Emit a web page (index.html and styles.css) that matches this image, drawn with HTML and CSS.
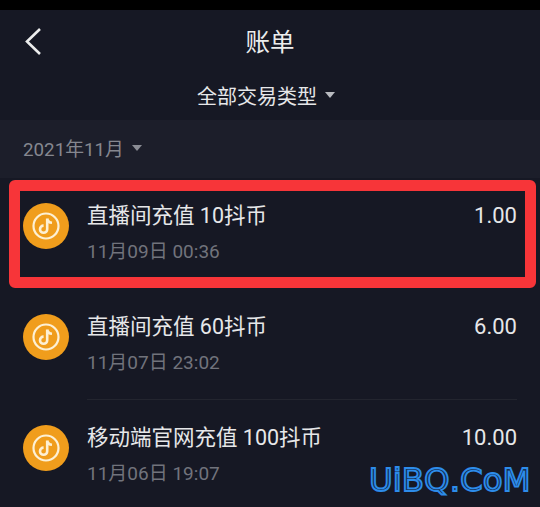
FILE: index.html
```html
<!DOCTYPE html>
<html>
<head>
    <title>账单</title>
    <link rel="stylesheet" href="styles.css">
</head>
<body>
    <div class="status-bar"></div>
    <header class="top">
        <div class="title-row">
            <svg class="back" width="18" height="28" viewBox="0 0 18 28">
                <path d="M16 2 L3 14.5 L16 27" fill="none" stroke="#eceded" stroke-width="2.6"/>
            </svg>
            <h1>账单</h1>
        </div>
        <div class="filter">全部交易类型<span class="arrow arrow-light"></span></div>
    </header>
    <div class="month">2021年11月<span class="arrow"></span></div>
    <ul class="list">
        <li class="row">
            <svg class="coin" viewBox="0 0 46 46">
                <circle cx="23" cy="23" r="23" fill="#f09d1c"/>
                <circle cx="23" cy="23" r="12.5" fill="none" stroke="#fdf0d4" stroke-width="2.2"/>
                <path d="M24.2 15.5 V26.2 A3.6 3.6 0 1 1 20.6 22.6 M24.2 15.5 C24.6 18.2 26.4 19.6 29 19.8" fill="none" stroke="#fdf0d4" stroke-width="2.6"/>
            </svg>
            <div class="info">
                <div class="name">直播间充值 10抖币</div>
                <div class="date">11月09日 00:36</div>
            </div>
            <div class="amount">1.00</div>
        </li>
        <li class="row">
            <svg class="coin" viewBox="0 0 46 46">
                <circle cx="23" cy="23" r="23" fill="#f09d1c"/>
                <circle cx="23" cy="23" r="12.5" fill="none" stroke="#fdf0d4" stroke-width="2.2"/>
                <path d="M24.2 15.5 V26.2 A3.6 3.6 0 1 1 20.6 22.6 M24.2 15.5 C24.6 18.2 26.4 19.6 29 19.8" fill="none" stroke="#fdf0d4" stroke-width="2.6"/>
            </svg>
            <div class="info">
                <div class="name">直播间充值 60抖币</div>
                <div class="date">11月07日 23:02</div>
            </div>
            <div class="amount">6.00</div>
        </li>
        <li class="row">
            <svg class="coin" viewBox="0 0 46 46">
                <circle cx="23" cy="23" r="23" fill="#f09d1c"/>
                <circle cx="23" cy="23" r="12.5" fill="none" stroke="#fdf0d4" stroke-width="2.2"/>
                <path d="M24.2 15.5 V26.2 A3.6 3.6 0 1 1 20.6 22.6 M24.2 15.5 C24.6 18.2 26.4 19.6 29 19.8" fill="none" stroke="#fdf0d4" stroke-width="2.6"/>
            </svg>
            <div class="info">
                <div class="name">移动端官网充值 100抖币</div>
                <div class="date">11月06日 19:07</div>
            </div>
            <div class="amount">10.00</div>
        </li>
    </ul>
    <div class="highlight"></div>
    <div class="watermark">UiBQ.CoM</div>
</body>
</html>
```

FILE: styles.css
```css
html,
body {
    margin: 0;
    height: 507px;
    overflow: hidden;
}

body {
    position: relative;
    background-color: #161824;
    font-family: Roboto, "Noto Sans CJK SC", sans-serif;
    color: #e6e7e9;
}

.status-bar {
    height: 10px;
    background-color: #000;
}

.top {
    height: 110px;
    box-sizing: border-box;
}

.title-row {
    position: relative;
    height: 62px;
    padding-bottom: 2px;
    box-sizing: border-box;
    display: flex;
    align-items: center;
    justify-content: center;
}

.title-row h1 {
    margin: 0;
    font-size: 24.5px;
    font-weight: 400;
    color: #eceded;
}

.back {
    position: absolute;
    left: 24px;
    top: 17px;
}

.filter {
    display: flex;
    align-items: center;
    justify-content: center;
    height: 46px;
    padding-right: 8px;
    box-sizing: border-box;
    font-size: 20px;
}

.arrow {
    width: 0;
    height: 0;
    margin-left: 8px;
    border-left: 5px solid transparent;
    border-right: 5px solid transparent;
    border-top: 6px solid #8a8c94;
}

.arrow-light {
    border-top-color: #b9bbc0;
}

.month {
    display: flex;
    align-items: center;
    height: 58px;
    padding: 0 0 3px 23px;
    box-sizing: border-box;
    background-color: #1c1e2a;
    font-size: 18.8px;
    color: #85878f;
}

.list {
    list-style: none;
    margin: 0;
    padding: 0;
}

.row {
    display: flex;
    height: 111px;
    padding: 25px 23px 0;
    box-sizing: border-box;
}

.coin {
    width: 46px;
    height: 46px;
    flex: none;
}

.info {
    flex: 1;
    margin-left: 18px;
    margin-top: -1px;
}

.name {
    font-size: 21.5px;
    line-height: 28px;
    color: #e6e7e9;
}

.date {
    margin-top: 9px;
    font-size: 19px;
    line-height: 25px;
    color: #71737c;
}

.amount {
    font-size: 22px;
    line-height: 28px;
    margin-top: -1px;
    color: #e6e7e9;
}

.row:nth-child(2) {
    position: relative;
}

.row:nth-child(2)::after {
    content: "";
    position: absolute;
    left: 87px;
    right: 23px;
    bottom: 0;
    height: 1px;
    background-color: #23252f;
}

.highlight {
    position: absolute;
    left: 9px;
    top: 180px;
    width: 527px;
    height: 108px;
    box-sizing: border-box;
    border: 11px solid #f73539;
    border-radius: 6px;
}

.watermark {
    position: absolute;
    left: 369px;
    top: 461px;
    font-family: "DejaVu Sans", sans-serif;
    font-size: 32.5px;
    color: #14304f;
    -webkit-text-stroke: 1.8px #2d8cea;
    white-space: nowrap;
}
```
